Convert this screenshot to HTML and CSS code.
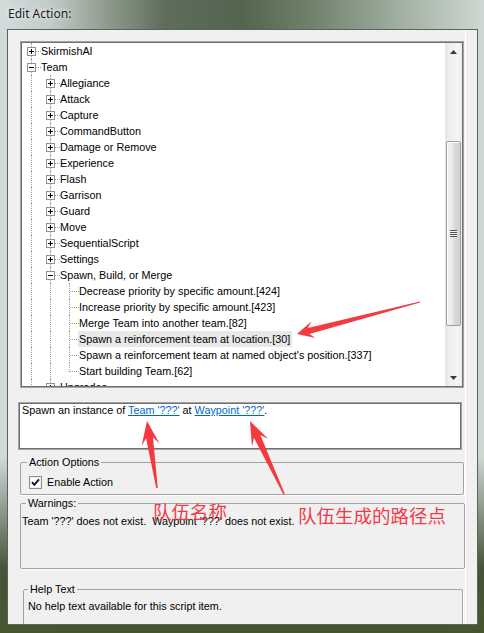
FILE: index.html
```html
<!DOCTYPE html>
<html>
<head>
<meta charset="utf-8">
<title>Edit Action</title>
<link rel="stylesheet" href="styles.css">
</head>
<body>
<div class="window">
  <div class="titlebar">Edit Action:</div>
  <div class="client">
    <div class="panel">
      <div class="tree">
        <div class="rows">
          <div class="row"><span class="cell tee"><i class="exp plus"></i></span><span class="lbl">SkirmishAI</span></div>
          <div class="row"><span class="cell tee"><i class="exp"></i></span><span class="lbl">Team</span></div>
          <div class="row"><span class="cell v"></span><span class="cell tee"><i class="exp plus"></i></span><span class="lbl">Allegiance</span></div>
          <div class="row"><span class="cell v"></span><span class="cell tee"><i class="exp plus"></i></span><span class="lbl">Attack</span></div>
          <div class="row"><span class="cell v"></span><span class="cell tee"><i class="exp plus"></i></span><span class="lbl">Capture</span></div>
          <div class="row"><span class="cell v"></span><span class="cell tee"><i class="exp plus"></i></span><span class="lbl">CommandButton</span></div>
          <div class="row"><span class="cell v"></span><span class="cell tee"><i class="exp plus"></i></span><span class="lbl">Damage or Remove</span></div>
          <div class="row"><span class="cell v"></span><span class="cell tee"><i class="exp plus"></i></span><span class="lbl">Experience</span></div>
          <div class="row"><span class="cell v"></span><span class="cell tee"><i class="exp plus"></i></span><span class="lbl">Flash</span></div>
          <div class="row"><span class="cell v"></span><span class="cell tee"><i class="exp plus"></i></span><span class="lbl">Garrison</span></div>
          <div class="row"><span class="cell v"></span><span class="cell tee"><i class="exp plus"></i></span><span class="lbl">Guard</span></div>
          <div class="row"><span class="cell v"></span><span class="cell tee"><i class="exp plus"></i></span><span class="lbl">Move</span></div>
          <div class="row"><span class="cell v"></span><span class="cell tee"><i class="exp plus"></i></span><span class="lbl">SequentialScript</span></div>
          <div class="row"><span class="cell v"></span><span class="cell tee"><i class="exp plus"></i></span><span class="lbl">Settings</span></div>
          <div class="row"><span class="cell v"></span><span class="cell tee"><i class="exp"></i></span><span class="lbl">Spawn, Build, or Merge</span></div>
          <div class="row"><span class="cell v"></span><span class="cell v"></span><span class="cell tee"></span><span class="lbl">Decrease priority by specific amount.[424]</span></div>
          <div class="row"><span class="cell v"></span><span class="cell v"></span><span class="cell tee"></span><span class="lbl">Increase priority by specific amount.[423]</span></div>
          <div class="row"><span class="cell v"></span><span class="cell v"></span><span class="cell tee"></span><span class="lbl">Merge Team into another team.[82]</span></div>
          <div class="row sel"><span class="cell v"></span><span class="cell v"></span><span class="cell tee"></span><span class="lbl">Spawn a reinforcement team at location.[30]</span></div>
          <div class="row"><span class="cell v"></span><span class="cell v"></span><span class="cell tee"></span><span class="lbl">Spawn a reinforcement team at named object's position.[337]</span></div>
          <div class="row"><span class="cell v"></span><span class="cell v"></span><span class="cell end"></span><span class="lbl">Start building Team.[62]</span></div>
          <div class="row"><span class="cell v"></span><span class="cell tee"><i class="exp plus"></i></span><span class="lbl">Upgrades</span></div>
        </div>
        <div class="vscroll">
          <div class="sb-btn"><svg width="7" height="4" viewBox="0 0 7 4"><polygon points="0,4 3.5,0 7,4" fill="#3a3a3a"/></svg></div>
          <div class="sb-track"><div class="thumb"><div class="grip"></div></div></div>
          <div class="sb-btn"><svg width="7" height="4" viewBox="0 0 7 4"><polygon points="0,0 7,0 3.5,4" fill="#3a3a3a"/></svg></div>
        </div>
      </div>

      <div class="desc">Spawn an instance of <span class="link">Team '???'</span> at <span class="link">Waypoint '???'</span>.</div>

      <fieldset class="group options">
        <legend>Action Options</legend>
        <label class="check"><span class="cbox"><svg width="11" height="11" viewBox="0 0 11 11"><path d="M2 5.2 L4.3 7.8 L9 2.3" fill="none" stroke="#111" stroke-width="1.9"/></svg></span>Enable Action</label>
      </fieldset>

      <fieldset class="group warnings">
        <legend>Warnings:</legend>
        <div class="gtext warn">Team '???' does not exist.  Waypoint '???' does not exist.</div>
      </fieldset>

      <fieldset class="group help">
        <legend>Help Text</legend>
        <div class="gtext helptext">No help text available for this script item.</div>
      </fieldset>
    </div>
  </div>

  <svg class="marks" width="484" height="633" viewBox="0 0 484 633">
    <polygon fill="#f23a3f" points="419.9,301.5 307.85,328.08 311.31,321.49 297,334 315.59,337.95 309.37,333.88 420.1,302.5"/>
    <polygon fill="#f23a3f" points="157.79,487.88 152.97,437.29 159.44,443.41 147,421 141.64,446.07 146.05,438.33 156.21,488.12"/>
    <polygon fill="#f23a3f" points="284.73,493.66 260.35,434.93 268.29,438.96 250,421 251.97,446.56 254.01,437.89 283.27,494.34"/>
  </svg>
  <div class="note n1">队伍名称</div>
  <div class="note n2">队伍生成的路径点</div>
</div>
</body>
</html>
```

FILE: styles.css
```css
* { box-sizing: border-box; }
html, body { margin: 0; padding: 0; }
body {
  width: 484px;
  height: 633px;
  overflow: hidden;
  font-family: "Liberation Sans", Arial, sans-serif;
  font-size: 10.8px;
  color: #000;
}

.window {
  position: relative;
  width: 484px;
  height: 633px;
  display: flex;
  flex-direction: column;
  background:
    linear-gradient(to bottom, rgba(40,55,25,0) 0%, rgba(40,55,25,0) 72%, rgba(45,60,28,.85) 90%, rgba(72,86,46,1) 100%),
    linear-gradient(to right, #d3dbdc 0%, #c2ccca 10%, #8f9c8d 22%, #5e6e5b 34%, #53644f 50%, #6f806b 64%, #94a493 78%, #b9c6bc 92%, #cfd8d2 100%);
}

.titlebar {
  height: 29px;
  padding: 6px 0 0 8px;
  font-family: "Noto Sans", "Open Sans", sans-serif;
  font-size: 12px;
  line-height: 16px;
  color: #1a1a1a;
  text-shadow: 0 0 7px rgba(255,255,255,.9), 0 0 3px rgba(255,255,255,.6);
}

.client {
  margin-left: 7px;
  width: 471px;
  height: 596px;
  border: 1px solid #58645c;
  background: #f0f0f0;
  overflow: hidden;
}

.panel {
  width: 458px;
  height: 100%;
  border-right: 1px solid #fff;
  display: flex;
  flex-direction: column;
  align-items: flex-start;
}

/* Tree view */
.tree {
  margin: 11px 0 0 12px;
  width: 444px;
  height: 347px;
  flex: none;
  border: 1px solid #a3a3a3;
  padding: 1px;
  box-shadow: inset 0 0 0 1px #707070;
  background: #fff;
  display: flex;
  overflow: hidden;
}
.rows {
  flex: 1;
  overflow: hidden;
  height: 343px;
}
.row {
  display: flex;
  height: 16px;
  line-height: 16px;
  white-space: nowrap;
}
.cell {
  position: relative;
  flex: none;
  width: 19px;
  height: 16px;
}
.cell.v::before,
.cell.tee::before,
.cell.end::before {
  content: "";
  position: absolute;
  left: 9px;
  top: 0;
  height: 16px;
  border-left: 1px dotted #a0a0a0;
}
.cell.end::before { height: 9px; }
.cell.tee::after,
.cell.end::after {
  content: "";
  position: absolute;
  left: 10px;
  top: 8px;
  width: 9px;
  border-top: 1px dotted #a0a0a0;
}
.exp {
  position: absolute;
  left: 5px;
  top: 4px;
  width: 9px;
  height: 9px;
  border: 1px solid #919191;
  background: #fff;
  z-index: 1;
}
.exp::before {
  content: "";
  position: absolute;
  left: 1px;
  top: 3px;
  width: 5px;
  height: 1px;
  background: #000;
}
.exp.plus::after {
  content: "";
  position: absolute;
  left: 3px;
  top: 1px;
  width: 1px;
  height: 5px;
  background: #000;
}
.lbl {
  margin-left: -1px;
  padding: 0 2px 0 1px;
}
.row.sel .lbl { background: #e8e8e8; }

/* Scrollbar */
.vscroll {
  flex: none;
  width: 17px;
  height: 343px;
  display: flex;
  flex-direction: column;
  background: linear-gradient(to right, #e4e4e4, #efefef 25%, #f4f4f4 75%, #ececec);
}
.sb-btn {
  height: 17px;
  flex: none;
  display: flex;
  align-items: center;
  justify-content: center;
}
.sb-btn svg { display: block; }
.sb-track { flex: 1; }
.thumb {
  margin: 81px 1px 0 1px;
  height: 185px;
  border: 1px solid #a0a0a0;
  border-radius: 2px;
  background: linear-gradient(to right, #f4f4f4, #e9e9e9 45%, #dadada 55%, #d2d2d2);
  box-shadow: inset 1px 1px 0 #fbfbfb;
  display: flex;
  align-items: center;
  justify-content: center;
}
.grip {
  width: 7px;
  height: 7px;
  background: repeating-linear-gradient(to bottom, #505050 0 1px, #f4f4f4 1px 2px);
}

/* Description */
.desc {
  margin: 14px 0 0 10px;
  width: 444px;
  height: 48px;
  flex: none;
  border: 1px solid #a3a3a3;
  box-shadow: inset 0 0 0 1px #707070;
  background: #fff;
  padding: 1px 3px;
  line-height: 13px;
}
.link {
  color: #0066cc;
  text-decoration: underline;
}

/* Group boxes */
.group {
  margin: 0;
  padding: 0;
  flex: none;
  border: 1px solid #a3a3a3;
  border-radius: 2px;
  box-shadow: 1px 1px 0 #fff;
  min-width: 0;
}
.group legend {
  padding: 0 2px;
  line-height: 13px;
  font-size: 10.8px;
}
.options {
  margin: 6px 0 0 12px;
  width: 444px;
  height: 39px;
}
.options legend { margin-left: 6px; }
.check {
  display: flex;
  align-items: center;
  gap: 5px;
  margin: 7px 0 0 8px;
  height: 13px;
  line-height: 13px;
}
.cbox {
  width: 13px;
  height: 13px;
  border: 1px solid #8e8f8f;
  background: #fff;
  box-shadow: inset 0 0 0 1px #ededed;
  display: flex;
  align-items: center;
  justify-content: center;
}
.cbox svg { display: block; }

.warnings {
  margin: 2px 0 0 12px;
  width: 445px;
  height: 72px;
}
.warnings legend { margin-left: 5px; }
.gtext {
  line-height: 13px;
  white-space: pre;
}
.warn { padding: 5px 0 0 1px; }

.help {
  margin: 14px 0 0 15px;
  width: 440px;
  height: 60px;
}
.help legend { margin-left: 4px; }
.helptext { padding: 4px 0 0 4px; }

/* Annotations */
.marks {
  position: absolute;
  left: 0;
  top: 0;
  pointer-events: none;
}
.note {
  position: absolute;
  font-family: "Noto Sans CJK SC", "Noto Sans CJK JP", sans-serif;
  font-size: 18.5px;
  line-height: 19px;
  color: #f23a48;
  white-space: nowrap;
}
.n1 { left: 153px; top: 502px; }
.n2 { left: 298px; top: 506px; }
```
